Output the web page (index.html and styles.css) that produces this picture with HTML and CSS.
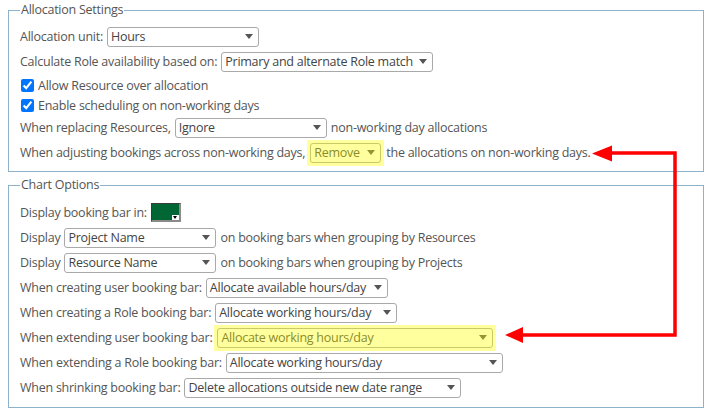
FILE: index.html
```html
<!DOCTYPE html>
<html>
<head>
<meta charset="utf-8">
<link rel="stylesheet" href="styles.css">
</head>
<body>
<div class="page">
  <fieldset class="group g1">
    <legend>Allocation Settings</legend>
    <div class="row"><span>Allocation unit:</span><span class="sel w152"><span class="val">Hours</span><span class="caret"></span></span></div>
    <div class="row"><span>Calculate Role availability based on:</span><span class="sel w212"><span class="val">Primary and alternate Role match</span><span class="caret"></span></span></div>
    <label class="row cb first"><input type="checkbox" checked><span>Allow Resource over allocation</span></label>
    <label class="row cb"><input type="checkbox" checked><span>Enable scheduling on non-working days</span></label>
    <div class="row"><span>When replacing Resources,</span><span class="sel w152"><span class="val">Ignore</span><span class="caret"></span></span><span>non-working day allocations</span></div>
    <div class="row"><span>When adjusting bookings across non-working days,</span><span class="hl"><span class="sel w71"><span class="val">Remove</span><span class="caret"></span></span></span><span>the allocations on non-working days.</span></div>
  </fieldset>
  <fieldset class="group g2">
    <legend>Chart Options</legend>
    <div class="row tall"><span>Display booking bar in:</span><span class="swatch"><span class="swatch-drop"><span class="mini-caret"></span></span></span></div>
    <div class="row"><span>Display</span><span class="sel w152"><span class="val">Project Name</span><span class="caret"></span></span><span>on booking bars when grouping by Resources</span></div>
    <div class="row"><span>Display</span><span class="sel w152"><span class="val">Resource Name</span><span class="caret"></span></span><span>on booking bars when grouping by Projects</span></div>
    <div class="row"><span>When creating user booking bar:</span><span class="sel w182"><span class="val">Allocate available hours/day</span><span class="caret"></span></span></div>
    <div class="row"><span>When creating a Role booking bar:</span><span class="sel w182"><span class="val">Allocate working hours/day</span><span class="caret"></span></span></div>
    <div class="row"><span>When extending user booking bar:</span><span class="hl"><span class="sel w276"><span class="val">Allocate working hours/day</span><span class="caret"></span></span></span></div>
    <div class="row"><span>When extending a Role booking bar:</span><span class="sel w277"><span class="val">Allocate working hours/day</span><span class="caret"></span></span></div>
    <div class="row"><span>When shrinking booking bar:</span><span class="sel w277"><span class="val">Delete allocations outside new date range</span><span class="caret"></span></span></div>
  </fieldset>
  <svg class="arrows" width="717" height="411" viewBox="0 0 717 411">
    <polyline points="611,153 675,153 675,335 522,335" fill="none" stroke="#ff0000" stroke-width="3.5"/>
    <polygon points="592,153.5 612,145.5 612,161.5" fill="#ff0000"/>
    <polygon points="505,335 523,327 523,343" fill="#ff0000"/>
  </svg>
</div>
</body>
</html>
```
FILE: styles.css
```css
html, body {
  margin: 0;
  padding: 0;
  background: #ffffff;
}
body {
  font-family: "Open Sans", "Liberation Sans", sans-serif;
  font-size: 12.5px;
  letter-spacing: -0.25px;
  color: #555555;
}
.page {
  position: relative;
  padding: 1px 13px 0 8px;
  width: 717px;
  height: 411px;
  box-sizing: border-box;
}
.group {
  margin: 0;
  border: 1px solid #8db2ca;
  padding: 5px 11px 6px 11px;
  min-width: 0;
}
.g2 {
  margin-top: 4px;
  padding-bottom: 7px;
}
.group legend {
  padding: 0 1px;
  line-height: 18px;
  color: #555555;
}
.row {
  display: flex;
  align-items: center;
  gap: 4px;
  height: 25px;
  white-space: nowrap;
}
.row.cb {
  height: 20px;
  gap: 0;
}
.row.cb.first {
  margin-top: 1px;
}
.row.tall {
  height: 26px;
}
.row.cb input {
  width: 13px;
  height: 13px;
  margin: 0 4px 0 1px;
  accent-color: #0075ff;
}
.sel {
  display: inline-flex;
  align-items: center;
  box-sizing: border-box;
  height: 20px;
  border: 1px solid #a9a9a9;
  border-radius: 3px;
  padding: 0 5px 0 3px;
  background: #ffffff;
  color: #444444;
}
.sel .val {
  flex: 1;
}
.caret {
  width: 0;
  height: 0;
  border-left: 4.5px solid transparent;
  border-right: 4.5px solid transparent;
  border-top: 5px solid #555555;
}
.w71 { width: 71px; }
.w152 { width: 152px; }
.w182 { width: 182px; }
.w212 { width: 212px; }
.w276 { width: 276px; }
.w277 { width: 277px; }
.hl {
  position: relative;
  display: inline-flex;
  margin-left: 1px;
  margin-right: 1px;
}
.hl::after {
  content: "";
  position: absolute;
  left: -3px;
  right: -3px;
  top: -3px;
  bottom: -3px;
  background: rgba(255, 255, 0, 0.38);
}
.swatch {
  position: relative;
  display: inline-block;
  box-sizing: border-box;
  width: 30px;
  height: 19px;
  background: #006633;
  border-top: 1px solid #3a3a3a;
  border-left: 1px solid #3a3a3a;
  border-right: 2px solid #8a8a8a;
  border-bottom: 2px solid #8a8a8a;
}
.swatch-drop {
  position: absolute;
  right: 0;
  bottom: 0;
  width: 7px;
  height: 5px;
  background: #ffffff;
  display: flex;
  align-items: center;
  justify-content: center;
}
.mini-caret {
  width: 0;
  height: 0;
  border-left: 2.5px solid transparent;
  border-right: 2.5px solid transparent;
  border-top: 3px solid #000000;
}
.arrows {
  position: absolute;
  left: 0;
  top: 0;
  pointer-events: none;
}
```
